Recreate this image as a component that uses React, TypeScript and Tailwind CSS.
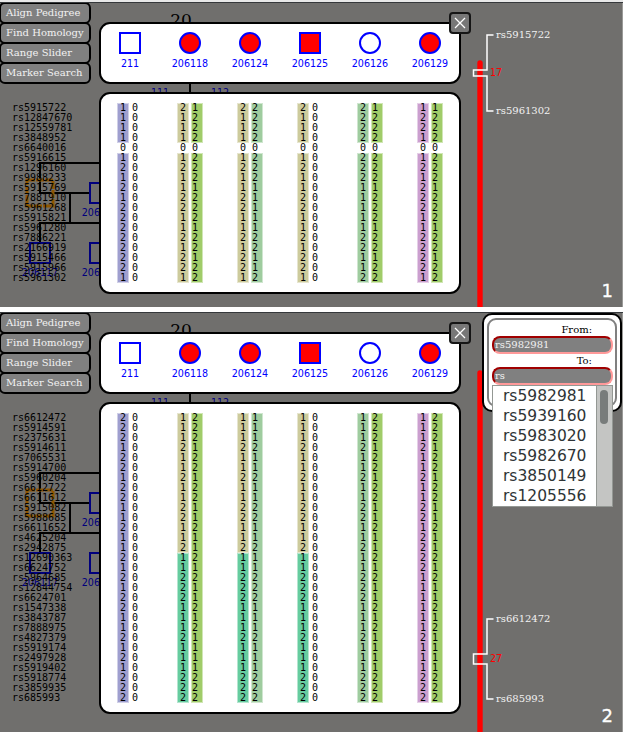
import React from "react";

const SERIF = "font-['DejaVu_Serif','Liberation_Serif',serif]";
const MONO = "font-['DejaVu_Sans_Mono','Liberation_Mono',monospace]";
const CONDENSED =
  "font-['DejaVu_Sans_Condensed','DejaVu_Sans',sans-serif] [font-stretch:condensed] text-[10.6px]";

type Segment = { rows: number; color: string };
type Strand = { alleles: string; segments: Segment[] };
type Person = { id: string; shape: "square" | "circle"; affected: boolean };

const people: Person[] = [
  { id: "211", shape: "square", affected: false },
  { id: "206118", shape: "circle", affected: true },
  { id: "206124", shape: "circle", affected: true },
  { id: "206125", shape: "square", affected: true },
  { id: "206126", shape: "circle", affected: false },
  { id: "206129", shape: "circle", affected: true },
];

const LILAC = "bg-[#9f9fcf]";
const TAN = "bg-[#cdcb9c]";
const LIME = "bg-[#a0cc69]";
const SAGE = "bg-[#9fcc9f]";
const PINK = "bg-[#cb9fcf]";
const TEAL = "bg-[#66cc9f]";
const NONE = "";

const broken = (color: string): Segment[] => [
  { rows: 4, color },
  { rows: 1, color: NONE },
  { rows: 13, color },
];
const whole = (color: string): Segment[] => [{ rows: 29, color }];
const crossed: Segment[] = [
  { rows: 14, color: TAN },
  { rows: 15, color: TEAL },
];

const firstMarkers = [
  "rs5915722", "rs12847670", "rs12559781", "rs3848952", "rs6640016", "rs5916615",
  "rs1296160", "rs9988233", "rs5915769", "rs7881910", "rs5961268", "rs5915821",
  "rs5961280", "rs7886221", "rs2166919", "rs5915466", "rs5915966", "rs5961302",
];

const firstStrands: [Strand, Strand][] = [
  [{ alleles: "111101212122222221", segments: broken(LILAC) }, { alleles: "0".repeat(18), segments: broken(NONE) }],
  [{ alleles: "211101211221121221", segments: broken(TAN) }, { alleles: "122202221222122122", segments: broken(LIME) }],
  [{ alleles: "211101211221121221", segments: broken(TAN) }, { alleles: "222202221111122112", segments: broken(SAGE) }],
  [{ alleles: "211101211221121221", segments: broken(TAN) }, { alleles: "0".repeat(18), segments: broken(NONE) }],
  [{ alleles: "222202221111122112", segments: broken(SAGE) }, { alleles: "122202221222122122", segments: broken(LIME) }],
  [{ alleles: "122101212221122221", segments: broken(PINK) }, { alleles: "122202221222122122", segments: broken(LIME) }],
];

const secondMarkers = [
  "rs6612472", "rs5914591", "rs2375631", "rs5914611", "rs7065531", "rs5914700",
  "rs5960204", "rs6612722", "rs6611612", "rs5915082", "rs5988685", "rs6611652",
  "rs4625204", "rs2942875", "rs12690363", "rs6624752", "rs5964685", "rs12844754",
  "rs6624701", "rs1547338", "rs3843787", "rs7888975", "rs4827379", "rs5919174",
  "rs2497928", "rs5919402", "rs5918774", "rs3859935", "rs685993",
];

const maternal = "11121121122112112221112111222";
const paternal = "22212212211211212112121111222";

const secondStrands: [Strand, Strand][] = [
  [{ alleles: "22212212211211212122112121222", segments: whole(LILAC) }, { alleles: "0".repeat(29), segments: whole(NONE) }],
  [{ alleles: maternal, segments: crossed }, { alleles: paternal, segments: whole(LIME) }],
  [{ alleles: maternal, segments: crossed }, { alleles: maternal, segments: whole(SAGE) }],
  [{ alleles: maternal, segments: crossed }, { alleles: "0".repeat(29), segments: whole(NONE) }],
  [{ alleles: maternal, segments: whole(SAGE) }, { alleles: paternal, segments: whole(LIME) }],
  [{ alleles: "11121121122122221111112111222", segments: whole(PINK) }, { alleles: paternal, segments: whole(LIME) }],
];

function Menu() {
  return (
    <nav className={`-ml-px -mt-px flex w-[92px] flex-col ${SERIF}`}>
      {["Align Pedigree", "Find Homology", "Range Slider", "Marker Search"].map((label) => (
        <button
          key={label}
          className="-mb-[2px] flex h-[22px] items-center whitespace-nowrap rounded-[6px] border-2 border-black bg-[#808080] pl-[5px] text-[10px] leading-none text-[#f2f2f2]"
        >
          {label}
        </button>
      ))}
    </nav>
  );
}

function Pedigree() {
  return (
    <svg className="absolute left-0 top-0" width="470" height="304" viewBox="0 3 470 304" fill="none">
      <path d="M100 163H40V193H90M70 193V223M100 223H40V243M190 80V96" stroke="#000" strokeWidth="2" />
      <path d="M27 180H53V206H27Z" stroke="#8f5600" strokeWidth="3" strokeDasharray="8 1" />
      <g stroke="#00007d" strokeWidth="2">
        <rect x="90" y="183" width="20" height="20" />
        <rect x="90" y="243" width="20" height="20" />
        <rect x="30" y="243" width="20" height="20" />
      </g>
      <g fill="#00007d" textAnchor="middle" className={CONDENSED}>
        <text x="100" y="216">206119</text>
        <text x="100" y="276">206120</text>
        <text x="40" y="276">206117</text>
        <text x="160" y="96">111</text>
        <text x="220" y="96">112</text>
      </g>
      <text x="181" y="26" fill="#000" fontSize="17" textAnchor="middle" className={SERIF}>20</text>
    </svg>
  );
}

function StrandColumn({ strand, second }: { strand: Strand; second?: boolean }) {
  let start = 0;
  return (
    <div className="flex w-3 flex-col">
      {strand.segments.map((segment, i) => {
        const part = strand.alleles.slice(start, start + segment.rows);
        start += segment.rows;
        return (
          <div
            key={i}
            className={`flex flex-col ${second ? "pl-px" : "pl-[3px]"} ${segment.color} ${
              segment.color ? "shadow-[inset_0_0_0_1px_rgba(255,255,255,0.5)]" : ""
            }`}
          >
            {part.split("").map((allele, j) => (
              <span key={j} className="h-[10px] leading-[10px]">{allele}</span>
            ))}
          </div>
        );
      })}
    </div>
  );
}

function Dialogs({ strands }: { strands: [Strand, Strand][] }) {
  return (
    <div className="flex w-[362px] flex-col gap-2 pt-[19px]">
      <div className="relative h-[62px] rounded-[11px] border-2 border-black bg-white">
        <div className="-mx-px flex pt-2">
          {people.map((p) => (
            <div key={p.id} className="flex w-[60px] flex-col items-center">
              <div
                className={`size-[22px] border-2 border-[#0000ff] ${p.shape === "circle" ? "rounded-full" : ""} ${
                  p.affected ? "bg-[#ff0000]" : "bg-white"
                }`}
              />
              <span className={`mt-[3px] leading-3 text-[#0000ff] ${CONDENSED}`}>{p.id}</span>
            </div>
          ))}
        </div>
        <button className="absolute -right-3 -top-3 flex size-[22px] items-center justify-center rounded-[4px] border-2 border-[#151515] bg-[#777]">
          <svg width="12" height="12" viewBox="0 0 12 12" stroke="#fff" strokeWidth="1.3">
            <path d="M1 1L11 11M11 1L1 11" />
          </svg>
        </button>
      </div>
      <div className={`rounded-[11px] border-2 border-black bg-white pb-[9px] pt-[9px] text-[10px] text-black ${MONO}`}>
        <div className="-mx-px flex">
          {strands.map(([a, b], i) => (
            <div key={i} className="flex w-[60px] gap-[2px] pl-[17px]">
              <StrandColumn strand={a} />
              <StrandColumn strand={b} second />
            </div>
          ))}
        </div>
      </div>
    </div>
  );
}

type Range = { top: number; from: number; to: number; bottom: number; label: string; first: string; last: string };

function RangeSlider({ range, height }: { range: Range; height: number }) {
  const { top, from, to, bottom, label, first, last } = range;
  return (
    <svg width="162" height={height} viewBox={`461 3 162 ${height}`} fill="none" className="shrink-0">
      <path d="M480 63V500" stroke="#f00" strokeWidth="5.4" strokeLinecap="round" />
      <path
        d={`M493.5 ${top}H487V${from}H473.5V${to}H487V${bottom}H493.5`}
        stroke="#fff"
        strokeWidth="1.5"
      />
      <g fill="#f2f2f2" fontSize="10" className={SERIF}>
        <text x="496" y={top + 3}>{first}</text>
        <text x="496" y={bottom + 3}>{last}</text>
      </g>
      <text x="490" y={(from + to) / 2 + 3} fill="#f00" className={CONDENSED}>{label}</text>
    </svg>
  );
}

function Panel({
  heightClass, height, markers, strands, range, number, children,
}: {
  heightClass: string;
  height: number;
  markers: string[];
  strands: [Strand, Strand][];
  range: Range;
  number: string;
  children?: React.ReactNode;
}) {
  return (
    <section className={`relative overflow-hidden border-r border-[#9a9a98] bg-[#706f6d] ${heightClass}`}>
      <Pedigree />
      <div className="relative flex items-start">
        <div className="w-[99px] shrink-0">
          <Menu />
          <ul className={`pl-3 pt-[21px] text-[10px] text-black ${MONO}`}>
            {markers.map((m) => (
              <li key={m} className="h-[10px] leading-[10px]">{m}</li>
            ))}
          </ul>
        </div>
        <Dialogs strands={strands} />
        <RangeSlider range={range} height={height} />
      </div>
      <span className="absolute bottom-[6px] right-[9px] font-['DejaVu_Sans',sans-serif] text-[18px] leading-5 text-white [-webkit-text-stroke:0.3px_white]">
        {number}
      </span>
      {children}
    </section>
  );
}

function Field({ label, value }: { label: string; value: string }) {
  return (
    <label className="flex flex-col">
      <span className="pr-[21px] text-right text-[10px] leading-[13px] text-black">{label}</span>
      <span className="flex h-[18px] items-center rounded-[8px] border-2 border-b-[#ff9999] border-l-[#a00000] border-r-[#ff9999] border-t-[#a00000] bg-[#808080] pl-px text-[10px] leading-none text-[#f2f2f2]">
        {value}
      </span>
    </label>
  );
}

function MarkerSearch() {
  return (
    <div className={`absolute right-0 top-0 h-[99px] w-[140px] rounded-[10px] border-2 border-black bg-white p-[3px] ${SERIF}`}>
      <div className="flex h-full flex-col rounded-[9px] border-2 border-[#808080] pl-[3px] pr-[2px] pt-[3px]">
        <Field label="From:" value="rs5982981" />
        <Field label="To:" value="rs" />
      </div>
      <div className="absolute left-2 top-[70px] flex h-[122px] w-[121px] border border-[#949894] bg-white font-['DejaVu_Sans',sans-serif] text-[15.5px] text-[#2e3436]">
        <ul className="flex-1 pl-[10px]">
          {["rs5982981", "rs5939160", "rs5983020", "rs5982670", "rs3850149", "rs1205556"].map((m) => (
            <li key={m} className="h-5 leading-5">{m}</li>
          ))}
        </ul>
        <div className="w-4 border-l border-[#949894] bg-[#c4c5c3] pl-[3px] pt-1">
          <div className="h-[34px] w-2 rounded-full bg-[#787c7b]" />
        </div>
      </div>
    </div>
  );
}

export default function App() {
  return (
    <main className="h-[732px] w-[623px] overflow-hidden bg-[#e8e8e8] pt-[2px]">
      <div className="border-t border-[#35383b]">
        <Panel
          heightClass="h-[304px]"
          height={304}
          markers={firstMarkers}
          strands={firstStrands}
          range={{ top: 35, from: 70, to: 76, bottom: 111, label: "17", first: "rs5915722", last: "rs5961302" }}
          number="1"
        />
      </div>
      <div className="border-t-[5px] border-white">
        <div className="border-t border-[#35383b]">
          <Panel
            heightClass="h-[419px]"
            height={419}
            markers={secondMarkers}
            strands={secondStrands}
            range={{ top: 309, from: 344, to: 354, bottom: 389, label: "27", first: "rs6612472", last: "rs685993" }}
            number="2"
          >
            <MarkerSearch />
          </Panel>
        </div>
      </div>
    </main>
  );
}
